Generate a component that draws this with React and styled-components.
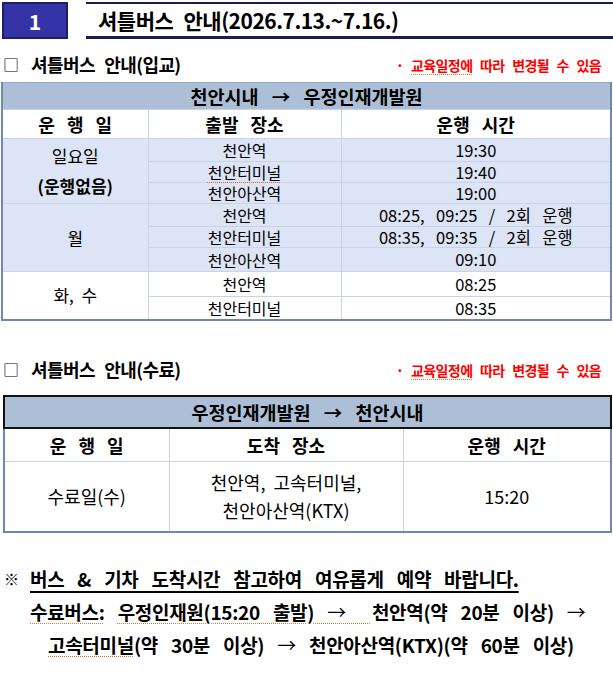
import React from "react";
import styled, { createGlobalStyle } from "styled-components";

const GlobalStyle = createGlobalStyle`
  body {
    margin: 0;
    background: #fff;
    font-family: "Noto Sans CJK KR", "Noto Sans", sans-serif;
    color: #000;
  }
`;

const inbound = [
  { day: ["일요일", "(운행없음)"], span: 3, place: "천안역", time: "19:30", tint: true, h: 23 },
  { place: "천안터미널", squiggle: true, time: "19:40", tint: true, h: 21 },
  { place: "천안아산역", time: "19:00", tint: true, h: 21 },
  { day: ["월"], span: 3, place: "천안역", time: "08:25,  09:25  /  2회  운행", tint: true, h: 23 },
  { place: "천안터미널", time: "08:35,  09:35  /  2회  운행", tint: true, h: 21 },
  { place: "천안아산역", time: "09:10", tint: true, h: 24 },
  { day: ["화,  수"], span: 2, place: "천안역", time: "08:25", h: 25 },
  { place: "천안터미널", time: "08:35", h: 23 },
];

function App() {
  return (
    <Page>
      <GlobalStyle />
      <TopBar>
        <NumberBox>1</NumberBox>
        <TitleBox>셔틀버스 안내(2026.7.13.~7.16.)</TitleBox>
      </TopBar>

      <SectionHead>
        <Heading>
          <Check>□</Check>셔틀버스 안내(입교)
        </Heading>
        <Note>
          · <Squiggle>교육일정에</Squiggle> 따라 변경될 수 있음
        </Note>
      </SectionHead>

      <Table>
        <colgroup>
          <Col $w={146} />
          <Col $w={193} />
          <Col $w={270} />
        </colgroup>
        <tbody>
          <Row $h={27}>
            <TitleCell colSpan={3}>천안시내 → 우정인재개발원</TitleCell>
          </Row>
          <Row $h={29}>
            <HeadCell>운 행 일</HeadCell>
            <HeadCell>출발 장소</HeadCell>
            <HeadCell>운행 시간</HeadCell>
          </Row>
          {inbound.map((r, i) => (
            <Row key={i} $h={r.h} $tint={r.tint}>
              {r.day && (
                <DayCell rowSpan={r.span}>
                  {r.day.map((line, j) => (
                    <DayLine key={j} $bold={j > 0}>
                      {line}
                    </DayLine>
                  ))}
                </DayCell>
              )}
              <Cell>{r.squiggle ? <Squiggle>{r.place}</Squiggle> : r.place}</Cell>
              <TimeCell>{r.time}</TimeCell>
            </Row>
          ))}
        </tbody>
      </Table>

      <SectionHead $gap={33}>
        <Heading>
          <Check>□</Check>셔틀버스 안내(수료)
        </Heading>
        <Note>
          · <Squiggle>교육일정에</Squiggle> 따라 변경될 수 있음
        </Note>
      </SectionHead>

      <Table $second>
        <colgroup>
          <Col $w={165} />
          <Col $w={234} />
          <Col $w={208} />
        </colgroup>
        <tbody>
          <Row $h={32}>
            <TitleCell colSpan={3} $dark>
              우정인재개발원 → 천안시내
            </TitleCell>
          </Row>
          <Row $h={34}>
            <HeadCell>운 행 일</HeadCell>
            <HeadCell>도착 장소</HeadCell>
            <HeadCell>운행 시간</HeadCell>
          </Row>
          <Row $h={70}>
            <BigCell>수료일(수)</BigCell>
            <BigCell>
              천안역,  고속터미널,
              <br />
              천안아산역(KTX)
            </BigCell>
            <BigCell>15:20</BigCell>
          </Row>
        </tbody>
      </Table>

      <Notes>
        <NoteLine>
          <Mark>※</Mark>
          <Underlined>버스 &amp; 기차 도착시간 참고하여 여유롭게 예약 바랍니다.</Underlined>
        </NoteLine>
        <NoteLine $indent={30}>
          <Squiggle>수료버스:</Squiggle>{" "}
          <Squiggle>
            우정인재원(15:20 출발) <Thin>→</Thin>{"  "}
          </Squiggle>
          천안역(약 20분 이상) <Thin>→</Thin>
        </NoteLine>
        <NoteLine $indent={48}>
          <Squiggle>고속터미널</Squiggle>(약 30분 이상) <Thin>→</Thin> 천안아산역(KTX)(약 60분 이상)
        </NoteLine>
      </Notes>
    </Page>
  );
}

export default App;

const Page = styled.div`
  width: 613px;
  padding-top: 2px;
`;

const TopBar = styled.div`
  display: flex;
  gap: 18px;
  height: 37px;
  margin-left: 2px;
`;

const NumberBox = styled.div`
  box-sizing: border-box;
  width: 66px;
  display: flex;
  align-items: center;
  justify-content: center;
  background: #3434a6;
  border: 2px solid #1f1f66;
  color: #fff;
  font-size: 21px;
  font-weight: 700;
`;

const TitleBox = styled.div`
  flex: 1;
  display: flex;
  align-items: center;
  padding-left: 12px;
  border-top: 2px solid #1c1c55;
  border-bottom: 3px solid #1c1c55;
  font-size: 21px;
  font-weight: 700;
  letter-spacing: -0.5px;
  word-spacing: 6px;
`;

const SectionHead = styled.div`
  display: flex;
  align-items: center;
  justify-content: space-between;
  height: 30px;
  margin-top: ${(p) => p.$gap || 10}px;
  padding: 0 12px 0 3px;
`;

const Heading = styled.div`
  display: flex;
  align-items: center;
  font-size: 18px;
  font-weight: 700;
  word-spacing: 6px;
  letter-spacing: -0.6px;
  white-space: pre;
`;

const Check = styled.span`
  font-size: 16px;
  font-weight: 400;
  width: 28px;
`;

const Note = styled.div`
  color: #ff0000;
  font-size: 14px;
  font-weight: 700;
  letter-spacing: -0.6px;
  word-spacing: 5px;
  padding-top: 2px;
  white-space: pre;
`;

const Squiggle = styled.span`
  text-decoration: underline dotted #e0762a;
  text-decoration-thickness: 1px;
  text-underline-offset: 3px;
`;

const Table = styled.table`
  border-collapse: collapse;
  table-layout: fixed;
  width: ${(p) => (p.$second ? 608 : 609)}px;
  margin-top: ${(p) => (p.$second ? 11 : 3)}px;
  margin-left: ${(p) => (p.$second ? 3 : 1)}px;
  border: 2px solid #6f88b2;
  border-top: 1px solid #93a8c6;
`;

const Col = styled.col`
  width: ${(p) => p.$w}px;
`;

const Row = styled.tr`
  height: ${(p) => p.$h}px;
  background: ${(p) => (p.$tint ? "#dce4f5" : "#fff")};
`;

const Cell = styled.td`
  padding: 0;
  border: 1px solid #c8d4e6;
  text-align: center;
  vertical-align: middle;
  font-size: 16px;
  line-height: 1;
  white-space: pre;
`;

const TitleCell = styled.th`
  padding: 0;
  background: #adbfd6;
  font-size: 18.5px;
  font-weight: 700;
  word-spacing: 9px;
  border: 1px solid #c8d4e6;
  border-top: ${(p) => (p.$dark ? "2px solid #111" : "1px solid #93a8c6")};
  ${(p) =>
    p.$dark &&
    `
    border-left: 2px solid #111;
    border-right: 2px solid #111;
    border-bottom: 2px solid #111;
  `}
`;

const HeadCell = styled.th`
  padding: 0;
  background: #fff;
  border: 1px solid #c8d4e6;
  font-size: 18px;
  font-weight: 700;
  word-spacing: 8px;
`;

const DayCell = styled(Cell)`
  font-size: 17px;
`;

const DayLine = styled.div`
  line-height: 30px;
  font-weight: ${(p) => (p.$bold ? 700 : 400)};
`;

const TimeCell = styled(Cell)`
  font-size: 16.5px;
  word-spacing: 2px;
`;

const BigCell = styled(Cell)`
  font-size: 18px;
  line-height: 28px;
`;

const Notes = styled.div`
  margin-top: 29px;
`;

const NoteLine = styled.div`
  height: 33px;
  line-height: 33px;
  padding-left: ${(p) => p.$indent || 4}px;
  font-size: 19px;
  font-weight: 700;
  letter-spacing: -0.3px;
  word-spacing: 9px;
  white-space: pre;
`;

const Mark = styled.span`
  display: inline-block;
  width: 26px;
  font-size: 15px;
  font-weight: 400;
  vertical-align: top;
`;

const Underlined = styled.span`
  text-decoration: underline;
  text-decoration-thickness: 1.5px;
  text-underline-offset: 4px;
`;

const Thin = styled.span`
  font-weight: 400;
`;
